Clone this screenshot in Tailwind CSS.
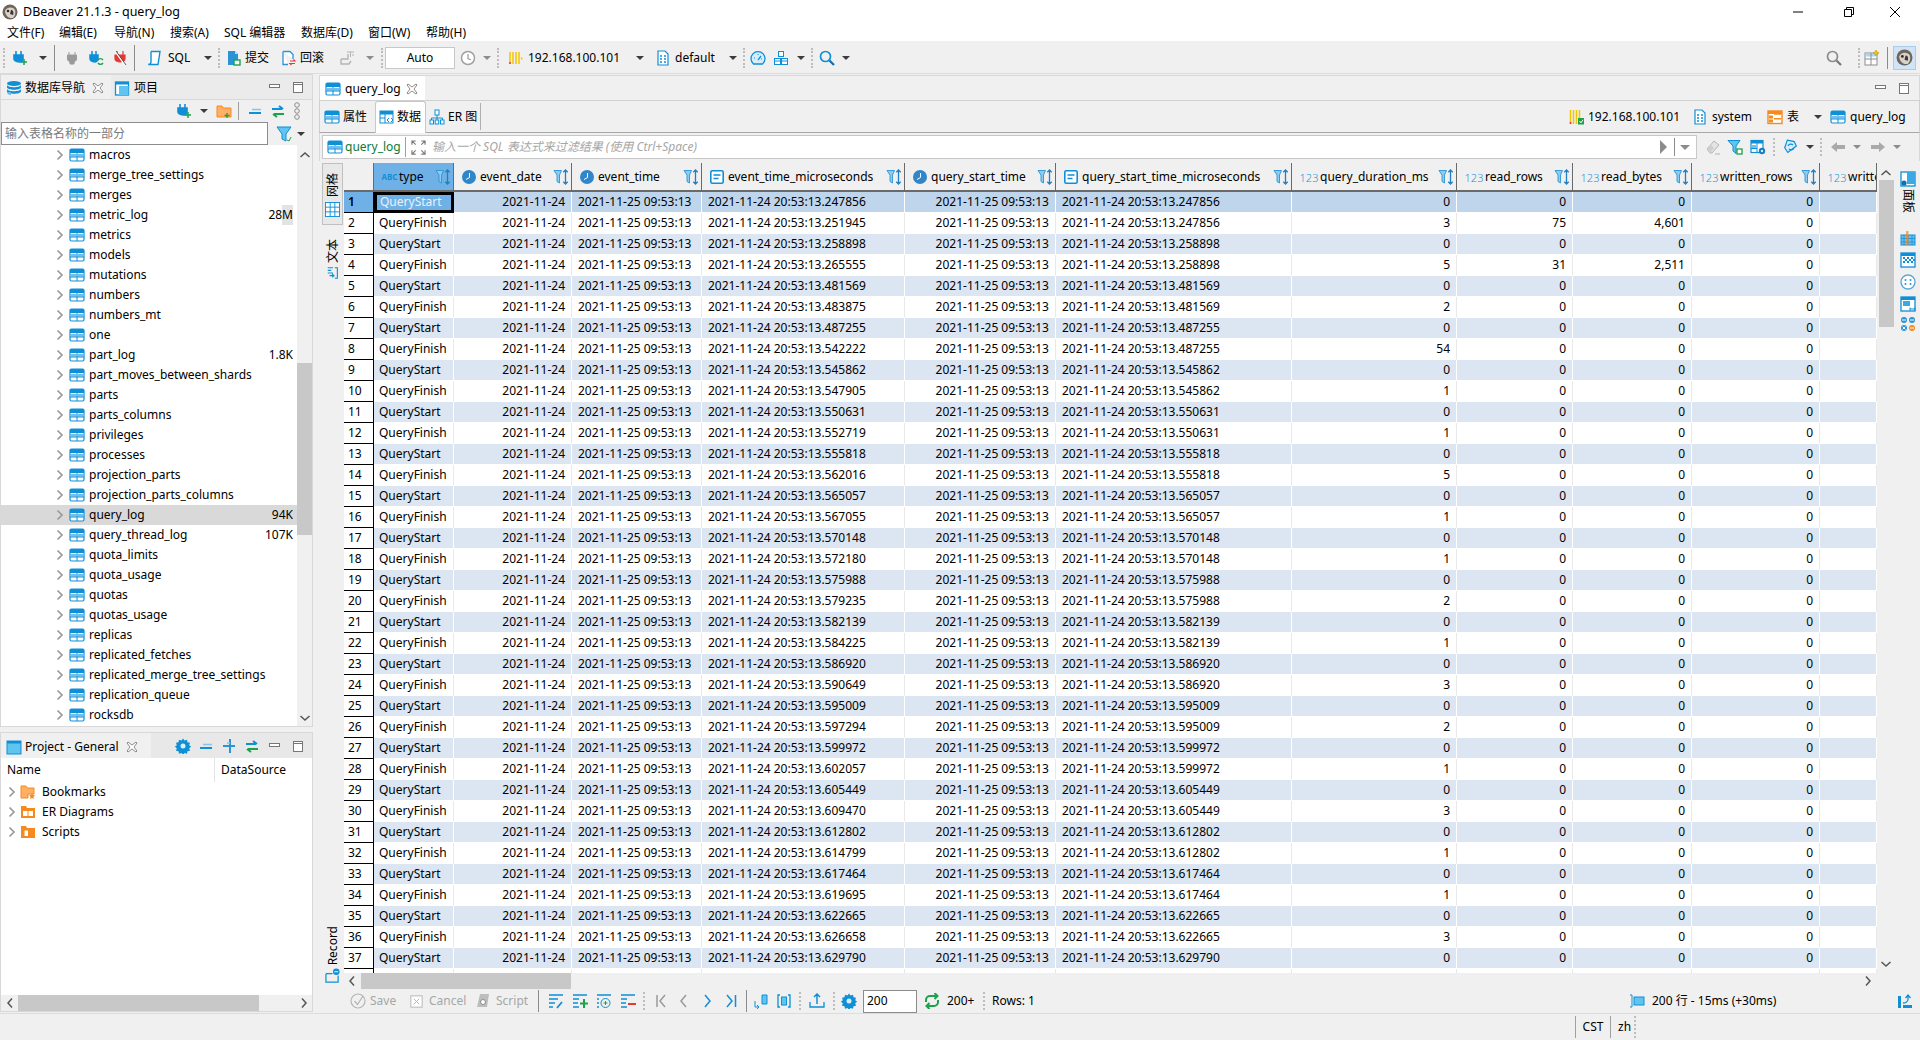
<!DOCTYPE html>
<html lang="zh-CN">
<head>
<meta charset="UTF-8">
<title>DBeaver 21.1.3 - query_log</title>
<script src="https://cdn.jsdelivr.net/npm/@tailwindcss/browser@4"></script>
</head>
<body class="bg-[#f0f0f0] text-black text-[12px] leading-none font-['Noto_Sans','Noto_Sans_CJK_SC',sans-serif]">

<!-- shared icons -->
<svg class="hidden">
  <symbol id="tbl" viewBox="0 0 16 16"><rect x="1" y="2" width="14" height="12" rx="1.5" fill="#fff" stroke="#0f8fd6" stroke-width="1.2"/><rect x="1" y="2" width="14" height="4" fill="#0f8fd6"/><rect x="2" y="7" width="5.3" height="2.6" fill="#6fc0ee"/><rect x="8.7" y="7" width="5.3" height="2.6" fill="#6fc0ee"/><path d="M8 6v8M1 10h14" stroke="#0f8fd6"/></symbol>
  <symbol id="plug" viewBox="0 0 16 16"><path d="M4 1v4M9 1v4M2 5h9v4c0 2-2 3-3.5 3S2 11 2 9z" fill="#0f8fd6" stroke="#0f8fd6" stroke-width="1.6"/><path d="M12 9v6M9 12h6" stroke="#1aa34a" stroke-width="1.5"/></symbol>
  <symbol id="plug-gray" viewBox="0 0 16 16"><path d="M5 2v3M11 2v3M3.500 5h9v4c0 2-2.500 3-2.500 3v2H6v-2s-2.500-1-2.500-3z" fill="#9a9a9a" stroke="#9a9a9a"/></symbol>
  <symbol id="plug-sync" viewBox="0 0 16 16"><path d="M4 1v4M8 1v4M2 5h8v4c0 2-2 3-3 3S2 11 2 9z" fill="#0f8fd6" stroke="#0f8fd6" stroke-width="1.5"/><path d="M10 10a3 3 0 0 1 5 0M15 13a3 3 0 0 1-5 0" fill="none" stroke="#1aa34a" stroke-width="1.4"/></symbol>
  <symbol id="plug-red" viewBox="0 0 16 16"><path d="M5 1v4M11 1v4M3 5h10v4c0 2-3 3-5 3s-5-1-5-3z" fill="#e53935" stroke="#e53935" stroke-width="1.200"/><path d="M3 1l10 14" stroke="#fff" stroke-width="1.500"/><path d="M4 1l10 14" stroke="#333" stroke-width=".8"/></symbol>
  <symbol id="sql" viewBox="0 0 16 16"><path d="M5 1.500h9L12 14.500H2.500" fill="#fff" stroke="#0f8fd6" stroke-width="1.400"/><path d="M5 1.500v10c0 1.500-1 3-2.500 3" fill="none" stroke="#0f8fd6" stroke-width="1.400"/></symbol>
  <symbol id="commit" viewBox="0 0 16 16"><path d="M3 1h7l3 3v11H3z" fill="#2a93d5"/><path d="M10 1v3h3" fill="#bfe3f7"/><rect x="9" y="10" width="6" height="5" fill="#fff" stroke="#1aa34a" stroke-width="1.400"/></symbol>
  <symbol id="rollback" viewBox="0 0 16 16"><path d="M3 1.500h7l3 3V9M8 14.500H3v-13" fill="#fff" stroke="#2a93d5" stroke-width="1.300"/><path d="M10 11h5l-1.500-1.500M15 13.500h-5l1.500 1.500" fill="none" stroke="#e53935" stroke-width="1.200"/></symbol>
  <symbol id="tx" viewBox="0 0 16 16"><path d="M2 9h7V4M2 9v5h8l2-3" fill="none" stroke="#b4b4b4" stroke-width="1.400"/><path d="M8 2h7M11.500 2v5M13 5h2" stroke="#b4b4b4"/></symbol>
  <symbol id="clock" viewBox="0 0 16 16"><circle cx="8" cy="8" r="6.500" fill="#fff" stroke="#a0a0a0" stroke-width="1.500"/><path d="M8 4v4.500l3 1.500" fill="none" stroke="#a0a0a0" stroke-width="1.300"/></symbol>
  <symbol id="conn" viewBox="0 0 16 16"><path d="M2 2v12M5 2v12M8 2v12M11 2v12" stroke="#f5c400" stroke-width="1.500"/><path d="M2 12v2" stroke="#e53935" stroke-width="1.500"/><path d="M13 7l2 1.500-2 1.500z" fill="#f5c400"/></symbol>
  <symbol id="conn-ok" viewBox="0 0 16 16"><path d="M1.500 1v14M4.500 1v14M7.500 1v14M10.500 1v8" stroke="#f5c400" stroke-width="1.500"/><path d="M1.500 13v2" stroke="#e53935" stroke-width="1.500"/><rect x="9" y="9" width="6" height="6.500" fill="#1aa34a"/><path d="M10.500 12l1.500 1.800 2-3" fill="none" stroke="#fff"/></symbol>
  <symbol id="doc" viewBox="0 0 16 16"><path d="M3 1h7l3 3v11H3z" fill="#fff" stroke="#0f8fd6" stroke-width="1.200"/><path d="M5 6h2M9 6h2M5 9h2M9 9h2M5 12h2M9 12h2" stroke="#0f8fd6" stroke-width="1.400"/></symbol>
  <symbol id="gauge" viewBox="0 0 16 16"><path d="M3.500 14a7 7 0 1 1 9 0z" fill="#d6edfa" stroke="#0f8fd6" stroke-width="1.300"/><path d="M8 10l3-4" stroke="#0f8fd6" stroke-width="1.300"/><path d="M4 8h1M8 4v1M12 9h-1" stroke="#0f8fd6"/></symbol>
  <symbol id="struct" viewBox="0 0 16 16"><rect x="5.500" y="1.500" width="5" height="5" fill="#fff" stroke="#0f8fd6"/><rect x="1.500" y="8.500" width="6" height="6" fill="#fff" stroke="#0f8fd6"/><rect x="8.500" y="8.500" width="6" height="6" fill="#fff" stroke="#0f8fd6"/><path d="M1.500 11h13M8 4h0" stroke="#0f8fd6"/></symbol>
  <symbol id="search" viewBox="0 0 16 16"><circle cx="6.500" cy="6.500" r="5" fill="none" stroke="#0f8fd6" stroke-width="1.700"/><path d="M10.500 10.500l4.500 4.500" stroke="#0f6fb0" stroke-width="2.200"/></symbol>
  <symbol id="search-g" viewBox="0 0 16 16"><circle cx="6.500" cy="6.500" r="5" fill="none" stroke="#8c8c8c" stroke-width="1.700"/><path d="M10.500 10.500l4.500 4.500" stroke="#777" stroke-width="2.200"/></symbol>
  <symbol id="persp" viewBox="0 0 16 16"><rect x="1" y="3" width="12" height="12" fill="#fff" stroke="#8c8c8c"/><rect x="1.500" y="3.500" width="11" height="3" fill="#a9d6f0"/><path d="M7 3v12M1 9h12" stroke="#8c8c8c"/><path d="M12 0l1 2 2 1-2 1-1 2-1-2-2-1 2-1z" fill="#f5c400" stroke="#b08a00" stroke-width=".5"/></symbol>
  <symbol id="beaver" viewBox="0 0 16 16"><circle cx="8" cy="8" r="7.500" fill="#6f655b"/><path d="M3 7c1-4 8-5 10-1 1 3 0 6-2 8H8C5 13 3 10 3 7z" fill="#d8d2c8"/><circle cx="6" cy="7" r="1.300" fill="#2b2b2b"/><path d="M9 6c2 0 3 2 2 5l-3-1z" fill="#3d3833"/></symbol>
  <symbol id="db" viewBox="0 0 16 16"><ellipse cx="8" cy="3.500" rx="7" ry="2.500" fill="#0f8fd6"/><path d="M1 5c1 3 13 3 14 0v2.500c-1 3-13 3-14 0zM1 9c1 3 13 3 14 0v2.500c-1 3-13 3-14 0z" fill="#0f8fd6"/><path d="M1 12c0 2 2 3 4 3V12z" fill="#63b9e8"/></symbol>
  <symbol id="proj" viewBox="0 0 16 16"><rect x="1" y="2" width="14" height="13" fill="#5fc4ef" stroke="#0f8fd6"/><rect x="1" y="2" width="14" height="2.500" fill="#0f8fd6"/></symbol>
  <symbol id="proj2" viewBox="0 0 16 16"><rect x="1.500" y="2" width="13" height="13" fill="#fff" stroke="#0f8fd6" stroke-width="1.300"/><rect x="1.500" y="2" width="13" height="2.500" fill="#0f8fd6"/><rect x="5" y="6" width="9.500" height="9" fill="#5fc4ef"/></symbol>
  <symbol id="xclose" viewBox="0 0 12 12"><path d="M2 1l4 3 4-3 1 1-3 4 3 4-1 1-4-3-4 3-1-1 3-4-3-4z" fill="#fff" stroke="#8c8c8c"/></symbol>
  <symbol id="folder-add" viewBox="0 0 16 16"><path d="M1 3h5l1 2h8v9H1z" fill="#ffb066" stroke="#f58a1f"/><path d="M11 10v5M8.500 12.500h5" stroke="#1aa34a" stroke-width="1.300"/></symbol>
  <symbol id="minus" viewBox="0 0 16 16"><path d="M2 10h12" stroke="#0f8fd6" stroke-width="2"/><path d="M5 6.500h9" stroke="#83c7ee" stroke-width="1.500"/></symbol>
  <symbol id="swap" viewBox="0 0 16 16"><path d="M2 6h10M9 3l4 3" fill="none" stroke="#0f8fd6" stroke-width="2"/><path d="M14 11H4M7 14l-4-3" fill="none" stroke="#1aa34a" stroke-width="2"/></symbol>
  <symbol id="plus" viewBox="0 0 16 16"><path d="M9 1v14M2 8h12" stroke="#2a93d5" stroke-width="2"/><path d="M6 5h3" stroke="#83c7ee" stroke-width="1.500"/></symbol>
  <symbol id="gear" viewBox="0 0 16 16"><path d="M8 .500l1.500 2 2.500-.800.500 2.500 2.500.500-.800 2.500 2 1.500-2 1.500.800 2.500-2.500.500-.500 2.500-2.500-.800-1.500 2-1.500-2-2.500.800-.500-2.500-2.500-.500.800-2.500-2-1.500 2-1.500-.800-2.500 2.500-.500.500-2.500 2.500.800z" fill="#0f8fd6"/><circle cx="8" cy="8" r="2.500" fill="#d6edfa"/></symbol>
  <symbol id="funnel" viewBox="0 0 16 16"><path d="M1 1h14L10 8v7l-4-2V8z" fill="#5fc4ef" stroke="#0f8fd6"/><path d="M11 14l2 1 2-4" fill="none" stroke="#1aa34a"/></symbol>
  <symbol id="chain" viewBox="0 0 8 18"><circle cx="4" cy="3" r="2.300" fill="none" stroke="#8c8c8c"/><circle cx="4" cy="9" r="2.300" fill="none" stroke="#8c8c8c"/><circle cx="4" cy="15" r="2.300" fill="none" stroke="#8c8c8c"/></symbol>
  <symbol id="hdr" viewBox="0 0 16 16"><path d="M1 1.500h7.500L6.500 6v8L4 12.500V6z" fill="#8fcbed" stroke="#2a93d5" stroke-width=".9"/><path d="M12.500 1v14M10.300 3.300l2.200-2.300 2.200 2.300M10.300 12.700l2.200 2.300 2.200-2.300" fill="none" stroke="#1f7fc0" stroke-width="1.300"/></symbol>
  <symbol id="clk" viewBox="0 0 14 14"><circle cx="7" cy="7" r="7" fill="#2f86c9"/><path d="M7.500 3v4.500L4 9.500" fill="none" stroke="#fff"/></symbol>
  <symbol id="micro" viewBox="0 0 14 14"><rect x=".800" y=".800" width="12.400" height="12.400" rx="1.500" fill="#fff" stroke="#0f8fd6" stroke-width="1.600"/><path d="M3.500 5h7M3.500 8.500h5" stroke="#0f8fd6" stroke-width="1.500"/></symbol>
  <symbol id="data" viewBox="0 0 16 16"><rect x="1" y="2" width="13" height="12" fill="#fff" stroke="#0f8fd6"/><rect x="1" y="2" width="13" height="3.500" fill="#0f8fd6"/><path d="M6 2v12M1 9h5" stroke="#0f8fd6"/><path d="M10 9l-2 2 2 2M12 9l2 2-2 2" fill="#fff" stroke="#0f8fd6"/></symbol>
  <symbol id="er" viewBox="0 0 16 16"><rect x="6" y="1" width="4" height="5" fill="#fff" stroke="#0f8fd6"/><path d="M8 6v3M2.500 11V9h11v2M8 9v2" fill="none" stroke="#0f8fd6"/><rect x="1" y="11" width="3.500" height="4" fill="#fff" stroke="#0f8fd6"/><rect x="6.200" y="11" width="3.500" height="4" fill="#fff" stroke="#0f8fd6"/><rect x="11.500" y="11" width="3.500" height="4" fill="#fff" stroke="#0f8fd6"/></symbol>
  <symbol id="expand" viewBox="0 0 16 16"><path d="M1 5V1h4M11 1h4v4M15 11v4h-4M5 15H1v-4M1 1l4 4M15 1l-4 4M15 15l-4-4M1 15l4-4" fill="none" stroke="#777" stroke-width="1.200"/></symbol>
  <symbol id="orange" viewBox="0 0 16 16"><rect x="1" y="2" width="14" height="12.500" fill="#fff" stroke="#f58a1f" stroke-width="1.400"/><rect x="1" y="2" width="14" height="3" fill="#f58a1f"/><rect x="2" y="6.500" width="4" height="3" fill="#f58a1f"/><rect x="2" y="10.500" width="4" height="3" fill="#f58a1f"/><path d="M7 5h7M7 9.800h7" stroke="#f58a1f" stroke-width="1.400"/></symbol>
  <symbol id="eraser" viewBox="0 0 16 16"><path d="M2 10l7-8 5 4-7 8H5z" fill="#e4e4e4" stroke="#b4b4b4"/><path d="M2 10l3 4 4-5-3-3z" fill="#cfcfcf"/><path d="M10 15h5" stroke="#b4b4b4"/></symbol>
  <symbol id="filter-g" viewBox="0 0 16 16"><path d="M1 1.500h12L9 7v7.500L6 12V7z" fill="#5fc4ef" stroke="#0f8fd6"/><rect x="10" y="10" width="5" height="5" fill="#fff" stroke="#1aa34a" stroke-width="1.300"/></symbol>
  <symbol id="tbl-set" viewBox="0 0 16 16"><rect x="1" y="1.500" width="12" height="12" fill="#fff" stroke="#0f8fd6" stroke-width="1.200"/><rect x="1" y="1.500" width="12" height="3" fill="#0f8fd6"/><rect x="2" y="6" width="4" height="3" fill="#6fc0ee"/><path d="M7 1.500v12M1 9.500h6" stroke="#0f8fd6"/><circle cx="12" cy="12" r="3.200" fill="#1f7fc0"/><circle cx="12" cy="12" r="1.100" fill="#fff"/></symbol>
  <symbol id="refresh" viewBox="0 0 16 16"><path d="M3 2h7l3 4-7 8-4-4z" fill="#d6edfa" stroke="#0f8fd6" stroke-width="1.200" transform="rotate(12 8 8)"/><path d="M5 7a3 3 0 0 1 5-1M11 9a3 3 0 0 1-5 1" fill="none" stroke="#0f8fd6" stroke-width="1.200"/></symbol>
  <symbol id="back" viewBox="0 0 16 16"><path d="M1 8l6-5v3h8v4H7v3z" fill="#a9a9a9"/></symbol>
  <symbol id="fwd" viewBox="0 0 16 16"><path d="M15 8L9 3v3H1v4h8v3z" fill="#a9a9a9"/></symbol>
  <symbol id="panel-i" viewBox="0 0 16 16"><rect x="1" y="1" width="14" height="14" fill="#fff" stroke="#0f8fd6" stroke-width="1.300"/><rect x="7" y="1" width="8" height="12" fill="#3aa9e4"/><circle cx="4" cy="12" r="2.600" fill="#0f6fb0"/></symbol>
  <symbol id="calc" viewBox="0 0 16 16"><rect x="1" y="5" width="14" height="10" fill="#6fc0ee" stroke="#0f8fd6"/><path d="M1 8.500h14M1 12h14M4 5v10M8 5v10M12 5v10" stroke="#0f8fd6" stroke-width=".8"/><rect x="6" y="1" width="2.500" height="14" fill="#f58a1f" opacity=".7"/></symbol>
  <symbol id="checker" viewBox="0 0 16 16"><rect x="1" y="1" width="14" height="14" fill="#fff" stroke="#0f8fd6" stroke-width="1.300"/><path d="M1 1h14v3H1zM3 5h2v2H3zM7 5h2v2H7zM11 5h2v2h-2zM5 7h2v2H5zM9 7h2v2H9zM13 7h2v2h-2zM3 9h2v2H3zM7 9h2v2H7zM11 9h2v2h-2z" fill="#0f8fd6"/></symbol>
  <symbol id="button" viewBox="0 0 16 16"><circle cx="8" cy="8" r="7" fill="#fff" stroke="#5fa8d8" stroke-width="1.400"/><circle cx="5.500" cy="6" r="1" fill="#2a93d5"/><circle cx="10.500" cy="6" r="1" fill="#2a93d5"/><circle cx="5.500" cy="10" r="1" fill="#2a93d5"/><circle cx="10.500" cy="10" r="1" fill="#2a93d5"/></symbol>
  <symbol id="layout" viewBox="0 0 16 16"><rect x="1" y="1" width="14" height="14" fill="#fff" stroke="#0f8fd6" stroke-width="1.300"/><rect x="1" y="1" width="14" height="3" fill="#0f8fd6"/><rect x="3" y="5" width="7" height="5" fill="#3aa9e4"/><path d="M10 13h5M10 11.500v3M15 11.500v3" stroke="#0f8fd6"/></symbol>
  <symbol id="fourdots" viewBox="0 0 16 16"><circle cx="4" cy="4" r="3" fill="#2a93d5"/><circle cx="12" cy="4" r="3" fill="#2a93d5"/><circle cx="4" cy="12" r="3" fill="#2a93d5"/><circle cx="12" cy="12" r="3" fill="#f58a1f"/><path d="M2 4h4M10 4h4M2.500 10.500l3 3M5.500 10.500l-3 3M10 12h4" stroke="#fff"/></symbol>
  <symbol id="grid-i" viewBox="0 0 16 16"><rect x=".500" y=".500" width="15" height="15" fill="#fff" stroke="#0f8fd6"/><path d="M5.500 0v16M10.500 0v16M0 5.500h16M0 10.500h16" stroke="#0f8fd6"/></symbol>
  <symbol id="text-i" viewBox="0 0 16 16"><path d="M2 2h6M2 5h4M2 8h6M10 2h3v12h-3M4 11h5l-2-2M9 11l-2 2" fill="none" stroke="#0f8fd6" stroke-width="1.300"/></symbol>
  <symbol id="record" viewBox="0 0 16 16"><path d="M1 6h7M1 6v9h13V8" fill="none" stroke="#0f8fd6" stroke-width="1.300"/><circle cx="12" cy="4" r="3.500" fill="#0f8fd6"/><path d="M10 4h4" stroke="#fff"/></symbol>
  <symbol id="ok-g" viewBox="0 0 16 16"><circle cx="8" cy="8" r="7" fill="none" stroke="#b4b4b4" stroke-width="1.200"/><path d="M4.500 8l3 3.500L13 3" fill="none" stroke="#b4b4b4" stroke-width="1.200"/></symbol>
  <symbol id="cancel-g" viewBox="0 0 16 16"><rect x="2" y="2" width="12" height="12" fill="#fff" stroke="#b4b4b4"/><path d="M5 5l6 6M11 5l-6 6" stroke="#b4b4b4"/></symbol>
  <symbol id="script-g" viewBox="0 0 16 16"><path d="M5 1h9l-2 13H2z" fill="#bdbdbd"/><circle cx="8" cy="9" r="2.500" fill="#fff" stroke="#8c8c8c"/></symbol>
  <symbol id="r-edit" viewBox="0 0 16 16"><path d="M1 2h14M1 6h9M1 10h6M1 14h4" stroke="#0f8fd6" stroke-width="1.600"/><path d="M9 15l5-6" stroke="#0f8fd6" stroke-width="1.800"/></symbol>
  <symbol id="r-add" viewBox="0 0 16 16"><path d="M1 2h14M1 6h6M1 10h5M1 14h6" stroke="#0f8fd6" stroke-width="1.600"/><path d="M12 6v9M8 10.500h8" stroke="#1aa34a" stroke-width="2"/></symbol>
  <symbol id="r-copy" viewBox="0 0 16 16"><path d="M1 2h14M1 6h2M1 10h2M1 14h2" stroke="#0f8fd6" stroke-width="1.600"/><circle cx="9.500" cy="10" r="4.500" fill="none" stroke="#0f8fd6"/><path d="M9.500 8v4M7.500 10h4" stroke="#1aa34a"/></symbol>
  <symbol id="r-del" viewBox="0 0 16 16"><path d="M1 2h14M1 6h6M1 10h5M1 14h6" stroke="#0f8fd6" stroke-width="1.600"/><path d="M8 11h8" stroke="#e53935" stroke-width="2"/></symbol>
  <symbol id="first" viewBox="0 0 16 16"><path d="M4 2v12" stroke="#9a9a9a" stroke-width="1.500"/><path d="M12 2L7 8l5 6" fill="none" stroke="#9a9a9a" stroke-width="1.500"/></symbol>
  <symbol id="prev" viewBox="0 0 16 16"><path d="M11 2L6 8l5 6" fill="none" stroke="#9a9a9a" stroke-width="1.500"/></symbol>
  <symbol id="next" viewBox="0 0 16 16"><path d="M5 2l5 6-5 6" fill="none" stroke="#0f8fd6" stroke-width="1.500"/></symbol>
  <symbol id="last" viewBox="0 0 16 16"><path d="M4 2l5 6-5 6" fill="none" stroke="#0f8fd6" stroke-width="1.500"/><path d="M12.500 2v12" stroke="#0f8fd6" stroke-width="1.500"/></symbol>
  <symbol id="fetch" viewBox="0 0 16 16"><path d="M2 8v6h4M4 12l2 2-2 2" fill="none" stroke="#0f8fd6"/><path d="M9 2h5v9H9z" fill="#5fc4ef" stroke="#0f8fd6"/></symbol>
  <symbol id="bracket" viewBox="0 0 16 16"><path d="M4 2H2v12h2M12 2h2v12h-2" fill="none" stroke="#0f8fd6" stroke-width="1.300"/><rect x="5.500" y="4" width="5" height="8" fill="#5fc4ef" stroke="#0f8fd6"/></symbol>
  <symbol id="export" viewBox="0 0 16 16"><path d="M8 1v10M5 4l3-3 3 3" fill="none" stroke="#0f8fd6" stroke-width="1.500"/><path d="M1 9v5h14V9" fill="none" stroke="#0f8fd6" stroke-width="1.300"/></symbol>
  <symbol id="sync" viewBox="0 0 16 16"><path d="M2 9V7a4 4 0 0 1 4-4h7M10.500 0l3 3-3 3M14 7v2a4 4 0 0 1-4 4H3M5.500 10l-3 3 3 3" fill="none" stroke="#1aa34a" stroke-width="2"/></symbol>
  <symbol id="col-i" viewBox="0 0 16 16"><path d="M3 2H1M3 14H1M3 2v12" fill="none" stroke="#0f8fd6"/><rect x="5" y="4" width="10" height="8" fill="#5fc4ef" stroke="#0f8fd6"/></symbol>
  <symbol id="side" viewBox="0 0 16 16"><path d="M1 3h3v12H1z" fill="#0f8fd6"/><path d="M6 15h9v-3H6z" fill="#0f8fd6"/><path d="M6 10c2 0 5-1 5-4V3M8.500 5L11 2l2.500 3" fill="none" stroke="#0f8fd6" stroke-width="1.300"/></symbol>
  <symbol id="arrow-down" viewBox="0 0 8 4"><path d="M0 0h8L4 4z" fill="#3c3c3c"/></symbol>
  <symbol id="arrow-g" viewBox="0 0 8 4"><path d="M0 0h8L4 4z" fill="#8c8c8c"/></symbol>
  <symbol id="chev" viewBox="0 0 8 12"><path d="M1.500 1.500L6 6l-4.500 4.500" fill="none" stroke="#9a9a9a" stroke-width="1.700"/></symbol>
  <symbol id="s-l" viewBox="0 0 8 12"><path d="M6 1.500L2 6l4 4.500" fill="none" stroke="#555" stroke-width="1.500"/></symbol>
  <symbol id="s-r" viewBox="0 0 8 12"><path d="M2 1.500L6 6l-4 4.500" fill="none" stroke="#555" stroke-width="1.500"/></symbol>
  <symbol id="s-u" viewBox="0 0 12 8"><path d="M1.500 6L6 2l4.500 4" fill="none" stroke="#555" stroke-width="1.500"/></symbol>
  <symbol id="s-d" viewBox="0 0 12 8"><path d="M1.500 2L6 6l4.500-4" fill="none" stroke="#555" stroke-width="1.500"/></symbol>
  <symbol id="bm" viewBox="0 0 16 16"><path d="M1 2h5l1 2h7v6H8v4H1z" fill="#ffb066" stroke="#f58a1f"/><path d="M12 9l1 2 2 .300-1.500 1.400.400 2.300-1.900-1-1.900 1 .400-2.300L9 11.300l2-.300z" fill="#f58a1f"/></symbol>
  <symbol id="erf" viewBox="0 0 16 16"><path d="M1 2h5l1 2h8v10H1z" fill="#f58a1f"/><rect x="3" y="7" width="4.500" height="5" fill="#fff"/><rect x="8.500" y="7" width="4.500" height="5" fill="#fff"/></symbol>
  <symbol id="scr" viewBox="0 0 16 16"><path d="M1 2h5l1 2h8v10H1z" fill="#f58a1f"/><rect x="4" y="6" width="4.500" height="6.500" fill="#fff" stroke="#f58a1f"/></symbol>
  <symbol id="win-min" viewBox="0 0 12 12"><path d="M1 6h10" stroke="#000"/></symbol>
  <symbol id="win-max" viewBox="0 0 12 12"><path d="M1.500 3.500h7v7h-7zM3.500 3.500v-2h7v7h-2" fill="none" stroke="#000"/></symbol>
  <symbol id="win-x" viewBox="0 0 12 12"><path d="M1 1l10 10M11 1L1 11" stroke="#000"/></symbol>
  <symbol id="p-min" viewBox="0 0 12 12"><rect x=".500" y="3.500" width="10" height="3" fill="#fff" stroke="#777"/></symbol>
  <symbol id="p-max" viewBox="0 0 12 12"><rect x="1.500" y="1.500" width="9" height="10" fill="#fff" stroke="#777"/><path d="M1.500 3.500h9" stroke="#777"/></symbol>
</svg>

<div class="flex flex-col w-[1920px] h-[1040px] overflow-hidden">

  <!-- title bar + menu -->
  <header class="h-[41px] bg-white shrink-0">
    <div class="flex items-center h-[24px]">
      <svg class="w-4 h-4 ml-[2px]"><use href="#beaver"/></svg>
      <span class="ml-[5px] text-[12.500px]">DBeaver 21.1.3 - query_log</span>
      <div class="ml-auto flex items-center">
        <svg class="w-3 h-3 mr-[39px]"><use href="#win-min"/></svg>
        <svg class="w-3 h-3 mr-[34px]"><use href="#win-max"/></svg>
        <svg class="w-3 h-3 mr-[19px]"><use href="#win-x"/></svg>
      </div>
    </div>
    <nav class="flex items-center h-[17px] pl-[7px] pt-[1px]">
      <span class="w-[52px]">文件(F)</span><span class="w-[55px]">编辑(E)</span><span class="w-[56px]">导航(N)</span><span class="w-[54px]">搜索(A)</span><span class="w-[77px]">SQL 编辑器</span><span class="w-[67px]">数据库(D)</span><span class="w-[58px]">窗口(W)</span><span>帮助(H)</span>
    </nav>
  </header>

  <!-- main toolbar -->
  <div class="flex items-center h-[33px] shrink-0 border-b border-[#dcdcdc] pt-[1px]">
    <i class="w-[2px] h-[20px] border-l-2 border-dotted border-[#bdbdbd] ml-[3px]"></i>
    <svg class="w-4 h-4 ml-[7px]"><use href="#plug"/></svg>
    <svg class="w-2 h-1 ml-[11px]"><use href="#arrow-down"/></svg>
    <i class="w-px h-[26px] bg-[#8c8c8c] ml-[7px]"></i>
    <svg class="w-4 h-4 ml-[9px]"><use href="#plug-gray"/></svg>
    <svg class="w-4 h-4 ml-[8px]"><use href="#plug-sync"/></svg>
    <svg class="w-4 h-4 ml-[8px]"><use href="#plug-red"/></svg>
    <i class="w-px h-[26px] bg-[#8c8c8c] ml-[6px]"></i>
    <svg class="w-4 h-4 ml-[11px]"><use href="#sql"/></svg>
    <span class="w-[34px] ml-[6px]">SQL</span>
    <svg class="w-2 h-1 ml-[2px]"><use href="#arrow-down"/></svg>
    <i class="w-[2px] h-[20px] border-l-2 border-dotted border-[#bdbdbd] ml-[6px]"></i>
    <svg class="w-4 h-4 ml-[5px]"><use href="#commit"/></svg>
    <span class="w-[28px] ml-[4px]">提交</span>
    <svg class="w-4 h-4 ml-[7px]"><use href="#rollback"/></svg>
    <span class="w-[28px] ml-[4px]">回滚</span>
    <svg class="w-4 h-4 ml-[11px]"><use href="#tx"/></svg>
    <svg class="w-2 h-1 ml-[11px]"><use href="#arrow-g"/></svg>
    <i class="w-[2px] h-[20px] border-l-2 border-dotted border-[#bdbdbd] ml-[7px]"></i>
    <div class="w-[70px] h-[22px] ml-[2px] bg-white border border-[#c8c8c8] flex items-center justify-center">Auto</div>
    <svg class="w-4 h-4 ml-[5px]"><use href="#clock"/></svg>
    <svg class="w-2 h-1 ml-[7px]"><use href="#arrow-g"/></svg>
    <i class="w-[2px] h-[20px] border-l-2 border-dotted border-[#bdbdbd] ml-[6px]"></i>
    <svg class="w-4 h-4 ml-[9px]"><use href="#conn"/></svg>
    <span class="w-[92px] ml-[4px]">192.168.100.101</span>
    <svg class="w-2 h-1 ml-[16px]"><use href="#arrow-down"/></svg>
    <svg class="w-4 h-4 ml-[11px]"><use href="#doc"/></svg>
    <span class="w-[42px] ml-[4px]">default</span>
    <svg class="w-2 h-1 ml-[12px]"><use href="#arrow-down"/></svg>
    <i class="w-[2px] h-[20px] border-l-2 border-dotted border-[#bdbdbd] ml-[6px]"></i>
    <svg class="w-4 h-4 ml-[5px]"><use href="#gauge"/></svg>
    <svg class="w-4 h-4 ml-[7px]"><use href="#struct"/></svg>
    <svg class="w-2 h-1 ml-[8px]"><use href="#arrow-down"/></svg>
    <i class="w-[2px] h-[20px] border-l-2 border-dotted border-[#bdbdbd] ml-[6px]"></i>
    <svg class="w-4 h-4 ml-[6px]"><use href="#search"/></svg>
    <svg class="w-2 h-1 ml-[7px]"><use href="#arrow-down"/></svg>
    <svg class="w-4 h-4 ml-auto"><use href="#search-g"/></svg>
    <i class="w-[2px] h-[20px] border-l-2 border-dotted border-[#bdbdbd] ml-[16px]"></i>
    <svg class="w-4 h-4 ml-[4px]"><use href="#persp"/></svg>
    <i class="w-px h-[22px] bg-[#8c8c8c] ml-[7px]"></i>
    <div class="w-[23px] h-[24px] ml-[5px] mr-[4px] bg-[#cfe5f7] border border-[#a8cdeb] flex items-center justify-center"><svg class="w-[17px] h-[17px]"><use href="#beaver"/></svg></div>
  </div>

  <div class="flex flex-1 min-h-0">

    <!-- left column -->
    <aside class="w-[319px] shrink-0 flex flex-col">
      <section class="h-[653px] w-[313px] border border-[#d8d8d8] flex flex-col bg-white">
        <div class="h-[25px] bg-[#ebebeb] flex items-center border-b border-[#d8d8d8]">
          <div class="w-[110px] h-full bg-[#f0f0f0] flex items-center pl-[5px] pt-[2px]">
            <svg class="w-4 h-4"><use href="#db"/></svg>
            <span class="ml-[3px] w-[62px]">数据库导航</span>
            <svg class="w-3 h-3 ml-[5px]"><use href="#xclose"/></svg>
          </div>
          <svg class="w-4 h-4 ml-[3px] mt-[2px]"><use href="#proj2"/></svg>
          <span class="ml-[4px] mt-[2px]">项目</span>
          <svg class="w-3 h-3 ml-auto"><use href="#p-min"/></svg>
          <svg class="w-3 h-3 ml-[11px] mr-[8px]"><use href="#p-max"/></svg>
        </div>
        <div class="h-[22px] flex items-center bg-[#f0f0f0]">
          <svg class="w-4 h-4 ml-[175px]"><use href="#plug"/></svg>
          <svg class="w-2 h-1 ml-[8px]"><use href="#arrow-down"/></svg>
          <svg class="w-4 h-4 ml-[8px]"><use href="#folder-add"/></svg>
          <i class="w-px h-[18px] bg-[#a0a0a0] ml-[6px]"></i>
          <svg class="w-4 h-4 ml-[8px]"><use href="#minus"/></svg>
          <svg class="w-4 h-4 ml-[7px]"><use href="#swap"/></svg>
          <svg class="w-2 h-[18px] ml-[7px]"><use href="#chain"/></svg>
        </div>
        <div class="h-[23px] flex items-center bg-[#f0f0f0]">
          <div class="w-[267px] h-[23px] bg-white border border-[#8c8c8c] flex items-center pl-[3px] text-[#7a7a7a]">输入表格名称的一部分</div>
          <svg class="w-4 h-4 ml-[8px]"><use href="#funnel"/></svg>
          <svg class="w-2 h-1 ml-[5px]"><use href="#arrow-down"/></svg>
        </div>
        <div class="flex flex-1 min-h-0">
          <ul id="tree" class="w-[296px] overflow-hidden"></ul>
          <div class="w-[15px] bg-[#f0f0f0] flex flex-col items-center">
            <svg class="w-3 h-2 mt-[6px]"><use href="#s-u"/></svg>
            <div class="w-[15px] h-[172px] bg-[#c8c8c8] mt-[204px]"></div>
            <svg class="w-3 h-2 mt-auto mb-[4px]"><use href="#s-d"/></svg>
          </div>
        </div>
      </section>

      <section class="mt-[5px] h-[280px] w-[313px] border border-[#d8d8d8] flex flex-col bg-white">
        <div class="h-[25px] bg-[#e8e8e8] flex items-center">
          <div class="w-[150px] h-full bg-[#f0f0f0] flex items-center pl-[5px] pt-[2px]">
            <svg class="w-4 h-4"><use href="#proj"/></svg>
            <span class="ml-[3px] w-[98px]">Project - General</span>
            <svg class="w-3 h-3 ml-[3px]"><use href="#xclose"/></svg>
          </div>
          <svg class="w-4 h-4 ml-[24px]"><use href="#gear"/></svg>
          <svg class="w-4 h-4 ml-[7px]"><use href="#minus"/></svg>
          <svg class="w-4 h-4 ml-[7px]"><use href="#plus"/></svg>
          <svg class="w-4 h-4 ml-[7px]"><use href="#swap"/></svg>
          <svg class="w-3 h-3 ml-[9px]"><use href="#p-min"/></svg>
          <svg class="w-3 h-3 ml-[11px]"><use href="#p-max"/></svg>
        </div>
        <div class="h-[24px] flex items-center">
          <span class="w-[214px] pl-[6px] h-full flex items-center border-r border-[#e4e4e4]">Name</span>
          <span class="pl-[6px]">DataSource</span>
        </div>
        <ul class="flex-1">
          <li class="h-[20px] flex items-center"><svg class="w-2 h-3 ml-[7px]"><use href="#chev"/></svg><svg class="w-4 h-4 ml-[4px]"><use href="#bm"/></svg><span class="ml-[6px]">Bookmarks</span></li>
          <li class="h-[20px] flex items-center"><svg class="w-2 h-3 ml-[7px]"><use href="#chev"/></svg><svg class="w-4 h-4 ml-[4px]"><use href="#erf"/></svg><span class="ml-[6px]">ER Diagrams</span></li>
          <li class="h-[20px] flex items-center"><svg class="w-2 h-3 ml-[7px]"><use href="#chev"/></svg><svg class="w-4 h-4 ml-[4px]"><use href="#scr"/></svg><span class="ml-[6px]">Scripts</span></li>
        </ul>
        <div class="h-[16px] bg-[#f0f0f0] flex items-center">
          <svg class="w-2 h-3 ml-[5px]"><use href="#s-l"/></svg>
          <div class="w-[241px] h-[16px] bg-[#c8c8c8] ml-[4px]"></div>
          <svg class="w-2 h-3 ml-auto mr-[4px]"><use href="#s-r"/></svg>
        </div>
      </section>
    </aside>

    <!-- editor -->
    <main class="flex-1 min-w-0 flex flex-col">
      <div class="h-[25px] mt-[1px] shrink-0 flex items-center border border-b-0 border-[#d8d8d8]">
        <div class="w-[105px] h-full bg-white flex items-center pl-[5px] pt-[1px]">
          <svg class="w-4 h-4"><use href="#tbl"/></svg>
          <span class="ml-[4px] w-[58px]">query_log</span>
          <svg class="w-3 h-3 ml-[3px]"><use href="#xclose"/></svg>
        </div>
        <svg class="w-3 h-3 ml-auto"><use href="#p-min"/></svg>
        <svg class="w-3 h-3 ml-[11px] mr-[9px]"><use href="#p-max"/></svg>
      </div>

      <div class="h-[33px] shrink-0 flex items-center border-x border-y border-[#d0d0d0] border-b-[#a8a8a8]">
        <svg class="w-4 h-4 ml-[4px]"><use href="#tbl"/></svg>
        <span class="ml-[3px] w-[28px]">属性</span>
        <div class="w-[51px] h-[32px] bg-white border-x border-t border-[#c8c8c8] rounded-t-[3px] flex items-center pl-[3px] ml-[4px]">
          <svg class="w-4 h-4"><use href="#data"/></svg>
          <span class="ml-[2px]">数据</span>
        </div>
        <svg class="w-4 h-4 ml-[3px]"><use href="#er"/></svg>
        <span class="ml-[3px] w-[32px]">ER 图</span>
        <i class="w-px h-[27px] bg-[#b0b0b0]"></i>
        <svg class="w-4 h-4 ml-auto"><use href="#conn-ok"/></svg>
        <span class="ml-[3px] w-[92px]">192.168.100.101</span>
        <svg class="w-4 h-4 ml-[12px]"><use href="#doc"/></svg>
        <span class="ml-[4px] w-[40px]">system</span>
        <svg class="w-4 h-4 ml-[15px]"><use href="#orange"/></svg>
        <span class="ml-[4px] w-[14px]">表</span>
        <svg class="w-2 h-1 ml-[13px]"><use href="#arrow-down"/></svg>
        <svg class="w-4 h-4 ml-[8px]"><use href="#tbl"/></svg>
        <span class="ml-[4px] mr-[11px] w-[58px]">query_log</span>
      </div>

      <div class="h-[28px] shrink-0 flex items-center pl-[2px] border-x border-[#d8d8d8]">
        <div class="w-[1375px] h-[24px] bg-white border border-[#c8c8c8] flex items-center">
          <svg class="w-4 h-4 ml-[4px]"><use href="#tbl"/></svg>
          <span class="ml-[2px] w-[58px] text-[#0b7a3b]">query_log</span>
          <i class="w-px h-[20px] bg-[#a0a0a0] ml-[2px]"></i>
          <svg class="w-[15px] h-[15px] ml-[5px]"><use href="#expand"/></svg>
          <span class="ml-[6px] italic text-[#a6a6a6]">输入一个 SQL 表达式来过滤结果 (使用 Ctrl+Space)</span>
          <svg class="w-[8px] h-[14px] ml-auto"><path d="M0 0l7 7-7 7z" fill="#8c8c8c"/></svg>
          <i class="w-px h-[18px] bg-[#8c8c8c] ml-[6px]"></i>
          <svg class="w-[10px] h-[5px] ml-[5px] mr-[6px]"><path d="M0 0h10L5 5z" fill="#8c8c8c"/></svg>
        </div>
        <svg class="w-4 h-4 ml-[8px]"><use href="#eraser"/></svg>
        <svg class="w-4 h-4 ml-[6px]"><use href="#filter-g"/></svg>
        <svg class="w-4 h-4 ml-[7px]"><use href="#tbl-set"/></svg>
        <i class="w-[2px] h-[18px] border-l-2 border-dotted border-[#bdbdbd] ml-[7px]"></i>
        <svg class="w-4 h-4 ml-[8px]"><use href="#refresh"/></svg>
        <svg class="w-2 h-1 ml-[7px]"><use href="#arrow-down"/></svg>
        <i class="w-[2px] h-[18px] border-l-2 border-dotted border-[#bdbdbd] ml-[6px]"></i>
        <svg class="w-4 h-4 ml-[8px]"><use href="#back"/></svg>
        <svg class="w-2 h-1 ml-[7px]"><use href="#arrow-g"/></svg>
        <svg class="w-4 h-4 ml-[9px]"><use href="#fwd"/></svg>
        <svg class="w-2 h-1 ml-[7px]"><use href="#arrow-g"/></svg>
      </div>

      <div class="flex flex-1 min-h-0 pt-[2px]">
        <!-- view switcher strip -->
        <div class="w-[25px] shrink-0 pl-[2px] flex flex-col items-center pb-[6px]">
          <div class="w-[21px] h-[62px] bg-[#e8e8e8] border border-[#c0c0c0] flex flex-col items-center pt-[9px] gap-[5px]">
            <span class="[writing-mode:vertical-rl] [text-orientation:sideways] rotate-180">网格</span>
            <svg class="w-[15px] h-[15px]"><use href="#grid-i"/></svg>
          </div>
          <span class="[writing-mode:vertical-rl] [text-orientation:sideways] rotate-180 mt-[14px]">文本</span>
          <svg class="w-[14px] h-[14px] mt-[3px]"><use href="#text-i"/></svg>
          <span class="[writing-mode:vertical-rl] rotate-180 mt-auto">Record</span>
          <svg class="w-[15px] h-[15px] mt-[3px]"><use href="#record"/></svg>
        </div>

        <!-- results grid -->
        <div class="flex-1 min-w-0 flex flex-col">
          <div class="flex h-[810px] shrink-0">
            <div class="w-[1533px] shrink-0 overflow-hidden bg-white">
              <table class="table-fixed border-separate border-spacing-0 w-[1533px]">
                <colgroup id="col-widths"></colgroup>
                <thead><tr id="head"></tr></thead>
                <tbody id="rows"></tbody>
              </table>
            </div>
            <div class="w-[18px] shrink-0 bg-[#f0f0f0] flex flex-col items-center">
              <svg class="w-3 h-2 mt-[6px]"><use href="#s-u"/></svg>
              <div class="w-[15px] h-[147px] bg-[#c8c8c8] mt-[3px]"></div>
              <svg class="w-3 h-2 mt-auto mb-[5px]"><use href="#s-d"/></svg>
            </div>
          </div>
          <div class="h-[16px] shrink-0 flex items-center w-[1533px]">
            <svg class="w-2 h-3 ml-[4px]"><use href="#s-l"/></svg>
            <div class="w-[210px] h-[16px] bg-[#c8c8c8] ml-[5px]"></div>
            <svg class="w-2 h-3 ml-auto mr-[5px]"><use href="#s-r"/></svg>
          </div>
        </div>

        <!-- right panels strip -->
        <div class="w-[25px] shrink-0 flex flex-col items-center pt-[8px]">
          <svg class="w-4 h-4"><use href="#panel-i"/></svg>
          <span class="[writing-mode:vertical-rl] [text-orientation:sideways] mt-[2px]">面板</span>
          <svg class="w-4 h-4 mt-[17px]"><use href="#calc"/></svg>
          <svg class="w-4 h-4 mt-[6px]"><use href="#checker"/></svg>
          <svg class="w-4 h-4 mt-[6px]"><use href="#button"/></svg>
          <svg class="w-4 h-4 mt-[6px]"><use href="#layout"/></svg>
          <svg class="w-4 h-4 mt-[4px]"><use href="#fourdots"/></svg>
        </div>
      </div>

      <!-- result status bar -->
      <div class="h-[24px] shrink-0 flex items-center text-[12px]">
        <svg class="w-4 h-4 ml-[31px]"><use href="#ok-g"/></svg>
        <span class="ml-[4px] w-[30px] text-[#a6a6a6]">Save</span>
        <svg class="w-[15px] h-[15px] ml-[9px]"><use href="#cancel-g"/></svg>
        <span class="ml-[5px] w-[38px] text-[#a6a6a6]">Cancel</span>
        <svg class="w-4 h-4 ml-[8px]"><use href="#script-g"/></svg>
        <span class="ml-[5px] w-[36px] text-[#a6a6a6]">Script</span>
        <i class="w-px h-[22px] bg-[#8c8c8c] ml-[6px]"></i>
        <svg class="w-4 h-4 ml-[9px]"><use href="#r-edit"/></svg>
        <svg class="w-4 h-4 ml-[8px]"><use href="#r-add"/></svg>
        <svg class="w-4 h-4 ml-[8px]"><use href="#r-copy"/></svg>
        <svg class="w-4 h-4 ml-[8px]"><use href="#r-del"/></svg>
        <i class="w-[2px] h-[18px] border-l-2 border-dotted border-[#bdbdbd] ml-[7px]"></i>
        <svg class="w-4 h-4 ml-[8px]"><use href="#first"/></svg>
        <svg class="w-4 h-4 ml-[6px]"><use href="#prev"/></svg>
        <svg class="w-4 h-4 ml-[9px]"><use href="#next"/></svg>
        <svg class="w-4 h-4 ml-[7px]"><use href="#last"/></svg>
        <i class="w-px h-[22px] bg-[#8c8c8c] ml-[7px]"></i>
        <svg class="w-4 h-4 ml-[6px]"><use href="#fetch"/></svg>
        <svg class="w-4 h-4 ml-[7px]"><use href="#bracket"/></svg>
        <i class="w-[2px] h-[18px] border-l-2 border-dotted border-[#bdbdbd] ml-[7px]"></i>
        <svg class="w-4 h-4 ml-[8px]"><use href="#export"/></svg>
        <i class="w-[2px] h-[18px] border-l-2 border-dotted border-[#bdbdbd] ml-[8px]"></i>
        <svg class="w-4 h-4 ml-[6px]"><use href="#gear"/></svg>
        <div class="w-[54px] h-[23px] ml-[6px] bg-white border border-[#8c8c8c] flex items-center pl-[3px]">200</div>
        <svg class="w-4 h-4 ml-[7px]"><use href="#sync"/></svg>
        <span class="ml-[7px] w-[30px]">200+</span>
        <i class="w-[2px] h-[18px] border-l-2 border-dotted border-[#bdbdbd] ml-[6px]"></i>
        <span class="ml-[7px]">Rows: 1</span>
        <svg class="w-4 h-4 ml-auto"><use href="#col-i"/></svg>
        <span class="ml-[7px] w-[133px]">200 行 - 15ms (+30ms)</span>
        <svg class="w-4 h-4 ml-[112px] mr-[7px]"><use href="#side"/></svg>
      </div>
    </main>
  </div>

  <!-- bottom status line -->
  <footer class="h-[27px] shrink-0 flex items-center border-t border-[#dcdcdc]">
    <i class="w-px h-[22px] bg-[#a0a0a0] ml-[1575px]"></i>
    <span class="w-[34px] text-center">CST</span>
    <i class="w-px h-[22px] bg-[#a0a0a0]"></i>
    <span class="ml-[7px] w-[16px]">zh</span>
    <i class="w-[2px] h-[22px] border-l-2 border-dotted border-[#bdbdbd]"></i>
  </footer>
</div>

<script>
  // navigator tree
  const tables = [['macros'],['merge_tree_settings'],['merges'],['metric_log','28<span class="inline-flex items-center h-[20px] bg-[#e3e3e3]">M</span>'],['metrics'],['models'],['mutations'],['numbers'],['numbers_mt'],['one'],['part_log','1.8K'],['part_moves_between_shards'],['parts'],['parts_columns'],['privileges'],['processes'],['projection_parts'],['projection_parts_columns'],['query_log','94K'],['query_thread_log','107K'],['quota_limits'],['quota_usage'],['quotas'],['quotas_usage'],['replicas'],['replicated_fetches'],['replicated_merge_tree_settings'],['replication_queue'],['rocksdb']];
  document.getElementById('tree').innerHTML = tables.map(([name, size]) => {
    const bg = name === 'query_log' ? 'bg-[#d9d9d9]' : '';
    const sizeCell = size ? `<span class="ml-auto mr-[4px] flex items-center">${size}</span>` : '';
    return `<li class="h-[20px] flex items-center ${bg}"><svg class="w-2 h-3 ml-[55px]"><use href="#chev"/></svg><svg class="w-4 h-4 ml-[5px]"><use href="#tbl"/></svg><span class="ml-[4px]">${name}</span>${sizeCell}</li>`;
  }).join('');

  // result set
  const abc = '<span class="text-[8px] font-bold text-[#0f8fd6] w-[19px] shrink-0">ABC</span>';
  const clk = '<svg class="w-[14px] h-[14px] shrink-0 ml-[2px] mr-[4px]"><use href="#clk"/></svg>';
  const mic = '<svg class="w-[14px] h-[14px] shrink-0 ml-[2px] mr-[4px]"><use href="#micro"/></svg>';
  const num = '<span class="text-[11px] font-light text-[#2a93d5] w-[22px] shrink-0">123</span>';
  const columns = [
    ['type', 'w-[80px]', abc], ['event_date', 'w-[118px]', clk], ['event_time', 'w-[130px]', clk],
    ['event_time_microseconds', 'w-[203px]', mic], ['query_start_time', 'w-[151px]', clk],
    ['query_start_time_microseconds', 'w-[236px]', mic], ['query_duration_ms', 'w-[165px]', num],
    ['read_rows', 'w-[116px]', num], ['read_bytes', 'w-[119px]', num], ['written_rows', 'w-[128px]', num], ['written_bytes', 'w-[57px]', num]
  ];
  document.getElementById('col-widths').innerHTML = '<col class="w-[30px]">' + columns.map(c => `<col class="${c[1]}">`).join('');
  document.getElementById('head').innerHTML =
    '<th class="h-[29px] bg-[#f0f0f0] border-b-2 border-[#6a6a6a] border-r border-r-[#6a6a6a]"></th>' +
    columns.map((c, i) => {
      const bg = i === 0 ? 'bg-[#6fb1e6]' : 'bg-[#f0f0f0]';
      const filter = i < 10 ? '<svg class="w-4 h-4 shrink-0 ml-auto mr-[2px]"><use href="#hdr"/></svg>' : '';
      return `<th class="h-[29px] ${bg} border-b-2 border-[#6a6a6a] border-r border-r-[#6a6a6a] font-normal overflow-hidden"><div class="flex items-center pl-[6px] pt-[1px] whitespace-nowrap">${c[2]}<span>${c[0]}</span>${filter}</div></th>`;
    }).join('');

  // start row time, then finish time / duration for the pair that follows it
  const pairs = [['247856','251945',3,75,'4,601'],['258898','265555',5,31,'2,511'],['481569','483875',2],['487255','542222',54],['545862','547905',1],['550631','552719',1],['555818','562016',5],['565057','567055',1],['570148','572180',1],['575988','579235',2],['582139','584225',1],['586920','590649',3],['595009','597294',2],['599972','602057',1],['605449','609470',3],['612802','614799',1],['617464','619695',1],['622665','626658',3],['629790','631802',1]];
  const data = [];
  pairs.forEach(p => {
    data.push({ type: 'QueryStart', ev: p[0], st: p[0], dur: 0, rr: 0, rb: 0 });
    data.push({ type: 'QueryFinish', ev: p[1], st: p[0], dur: p[2], rr: p[3] || 0, rb: p[4] || 0 });
  });

  const cell = (text, right, line) =>
    `<td class="h-[21px] p-0 px-[6px] pb-[1px] border-r ${line} overflow-hidden whitespace-nowrap ${right ? 'text-right' : 'text-left'}">${text}</td>`;

  document.getElementById('rows').innerHTML = data.map((r, i) => {
    const first = i === 0;
    const rowBg = first ? 'bg-[#bed5ec]' : i % 2 === 0 ? 'bg-[#dce6f2]' : 'bg-white';
    const line = i % 2 === 0 ? 'border-r-white border-b border-b-white' : 'border-r-[#e9e9e9] border-b border-b-white';
    const hdr = first ? 'bg-[#6fb1e6] font-semibold' : 'bg-white';
    const typeCell = first
      ? `<td class="h-[21px] p-0 pl-[3px] pb-[1px] bg-[#6fb1e6] text-[#e8f1fa] border-[3px] border-black">${r.type}</td>`
      : `<td class="h-[21px] p-0 pl-[5px] pb-[1px] border-r ${line} overflow-hidden whitespace-nowrap">${r.type}</td>`;
    return `<tr class="${rowBg}"><td class="h-[21px] p-0 pl-[4px] pb-[1px] ${hdr} border-b border-b-black border-r border-r-black">${i + 1}</td>` +
      typeCell +
      cell('2021-11-24', true, line) + cell('2021-11-25 09:53:13', false, line) +
      cell('2021-11-24 20:53:13.' + r.ev, false, line) + cell('2021-11-25 09:53:13', true, line) +
      cell('2021-11-24 20:53:13.' + r.st, false, line) + cell(r.dur, true, line) +
      cell(r.rr, true, line) + cell(r.rb, true, line) + cell(0, true, line) + cell('', true, line) + '</tr>';
  }).join('');
</script>
</body>
</html>
